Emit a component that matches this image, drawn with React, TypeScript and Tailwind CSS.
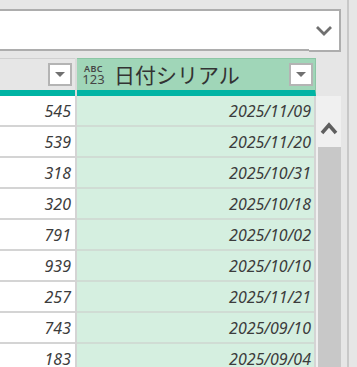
import React from 'react';

// --- Data ---
interface Row {
  serial: number;
  date: string;
}

const rows: Row[] = [
  { serial: 545, date: '2025/11/09' },
  { serial: 539, date: '2025/11/20' },
  { serial: 318, date: '2025/10/31' },
  { serial: 320, date: '2025/10/18' },
  { serial: 791, date: '2025/10/02' },
  { serial: 939, date: '2025/10/10' },
  { serial: 257, date: '2025/11/21' },
  { serial: 743, date: '2025/09/10' },
  { serial: 183, date: '2025/09/04' },
];

// --- Small pieces ---
const FilterButton: React.FC = () => (
  <div className="w-[24px] h-[23px] bg-white border-2 border-[#b4b4b4] flex items-center justify-center shrink-0">
    <svg width="10" height="6" viewBox="0 0 10 6">
      <polygon points="0,0 10,0 5,5" fill="#707070" />
    </svg>
  </div>
);

const TypeIcon: React.FC = () => (
  <div className="flex flex-col items-center text-[#454545] w-[21px] gap-[1px]" style={{ fontFamily: '"Noto Sans", sans-serif' }}>
    <span className="text-[9px] font-semibold tracking-[0.5px] leading-[8px]">ABC</span>
    <span className="text-[13px] leading-[11px]">123</span>
  </div>
);

export default function App() {
  return (
    <div className="w-[357px] h-[367px] overflow-hidden bg-[#e6e6e6] flex" style={{ fontFamily: '"Noto Sans", "Noto Sans CJK JP", sans-serif' }}>
      <div className="w-[347px] shrink-0 flex flex-col pt-[9px]">
        {/* formula bar */}
        <div className="flex items-start w-[341px]">
          <div className="flex-1 h-[42px] bg-white border-y-2 border-[#adadad]" />
          <div className="w-[32px] h-[43px] bg-white border-y-2 border-r-2 border-[#adadad] flex items-center justify-center">
            <svg width="18" height="11" viewBox="0 0 18 11">
              <polyline points="2,2 9,9 16,2" fill="none" stroke="#707070" strokeWidth="2.8" />
            </svg>
          </div>
        </div>

        {/* column headers */}
        <div className="flex h-[38px] mt-[6px]">
          <div className="w-[75px] bg-[#e6e6e6] border-t border-t-[#d0d0d0] border-b-[6px] border-b-[#00b4a4] flex items-center justify-end pr-[3px]">
            <FilterButton />
          </div>
          <div className="w-[2px] bg-[#dadada]" />
          <div className="w-[239px] bg-[#a0d6b8] border-t border-r border-[#8cc6a5] border-b-[6px] border-b-[#00b4a4] flex items-center pl-[6px] pr-[2px]">
            <TypeIcon />
            <span className="ml-[10px] text-[21px] leading-none text-[#333] flex-1" style={{ fontFamily: '"Noto Sans CJK JP", sans-serif' }}>
              日付シリアル
            </span>
            <FilterButton />
          </div>
        </div>

        {/* rows + scrollbar */}
        <div className="flex flex-1 min-h-0">
          <div className="w-[316px]">
            {rows.map((r) => (
              <div key={r.date} className="flex h-[31px] italic text-[16px] text-[#3c3c3c]">
                <div className="w-[75px] bg-white border-b-2 border-[#d4d4d4] flex items-center justify-end pr-[4px]">
                  {r.serial}
                </div>
                <div className="w-[2px] bg-[#d4d4d4]" />
                <div className="w-[237px] bg-[#d5efe0] border-b-2 border-[#d0dcd4] flex items-center justify-end pr-[3px]">
                  {r.date}
                </div>
                <div className="w-[2px] bg-[#d4d4d4]" />
              </div>
            ))}
          </div>
          <div className="w-[25px] bg-[#f0f0f0] flex flex-col pl-[2px]">
            <div className="h-[51px] flex justify-center pt-[25px] pr-[2px]">
              <svg width="18" height="14" viewBox="0 0 18 14">
                <polyline points="2,12 9,4 16,12" fill="none" stroke="#5f5f5f" strokeWidth="3.5" />
              </svg>
            </div>
            <div className="flex-1 bg-[#c8c8c8]" />
          </div>
        </div>
      </div>
      <div className="w-[2px] bg-[#c8c8c8]" />
    </div>
  );
}
